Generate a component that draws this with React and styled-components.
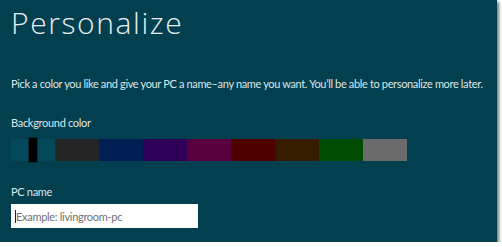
import React from "react";
import styled, { createGlobalStyle } from "styled-components";

const Global = createGlobalStyle`
  html, body { margin: 0; padding: 0; background: #ffffff; }
  body { font-family: Lato, "Open Sans", "Liberation Sans", sans-serif; }
`;

const Frame = styled.div`
  width: 497px;
  height: 242px;
  box-sizing: border-box;
  background: #023f4f;
  color: #e6eef0;
  padding: 4px 0 0 11px;
  box-shadow: 2px 2px 3px rgba(0, 0, 0, 0.55);
  display: flex;
  flex-direction: column;
`;

const Title = styled.h1`
  margin: 0;
  font-family: "Open Sans", sans-serif;
  font-weight: 300;
  font-size: 30px;
  line-height: 38px;
  letter-spacing: 1.6px;
  color: #e8f0f2;
`;

const Intro = styled.p`
  margin: 35px 0 0 0;
  font-size: 11px;
  line-height: 14px;
  letter-spacing: -0.35px;
  color: #dde7ea;
  white-space: nowrap;
`;

const Label = styled.div`
  margin-top: ${(p) => p.$top}px;
  font-size: 11px;
  line-height: 14px;
  letter-spacing: -0.3px;
  color: #dde7ea;
`;

const Swatches = styled.div`
  margin-top: 9px;
  display: flex;
  height: 22px;
`;

const Swatch = styled.div`
  position: relative;
  width: 44px;
  height: 22px;
  background: ${(p) => p.$color};
`;

const Thumb = styled.div`
  position: absolute;
  left: 17px;
  top: -2px;
  width: 10px;
  height: 26px;
  box-sizing: border-box;
  background: #000;
  border: 1px solid #0b2a33;
`;

const Input = styled.div`
  margin-top: 5px;
  width: 187px;
  height: 24px;
  box-sizing: border-box;
  background: #ffffff;
  display: flex;
  align-items: center;
  padding-left: 4px;
  font-size: 11px;
  letter-spacing: -0.3px;
  color: #707070;
`;

const Caret = styled.span`
  display: inline-block;
  width: 1px;
  height: 13px;
  background: #222;
`;

const colors = [
  "#03495a",
  "#262626",
  "#001f54",
  "#2e005a",
  "#58003f",
  "#4e0000",
  "#361c00",
  "#004c00",
  "#6b6b6b",
];

export default function App() {
  return (
    <>
      <Global />
      <Frame>
        <Title>Personalize</Title>
        <Intro>
          Pick a color you like and give your PC a name–any name you want. You’ll be able to personalize more later.
        </Intro>
        <Label $top={25}>Background color</Label>
        <Swatches>
          {colors.map((c, i) => (
            <Swatch key={c} $color={c}>
              {i === 0 && <Thumb />}
            </Swatch>
          ))}
        </Swatches>
        <Label $top={24}>PC name</Label>
        <Input>
          <Caret />
          Example: livingroom-pc
        </Input>
      </Frame>
    </>
  );
}
